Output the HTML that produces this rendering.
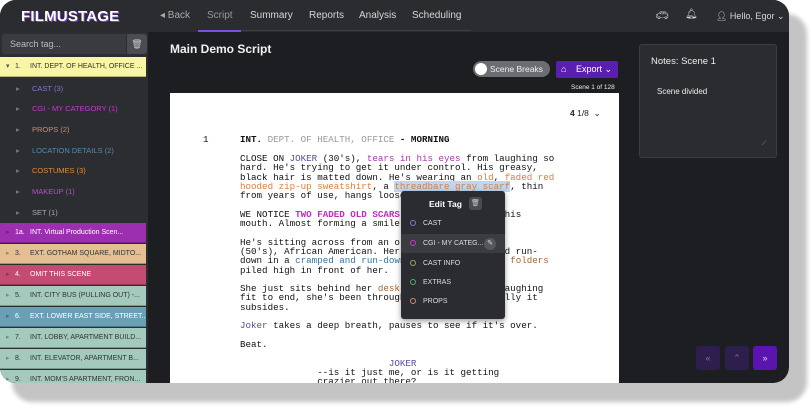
<!DOCTYPE html>
<html><head><meta charset="utf-8"><style>
*{box-sizing:border-box;margin:0;padding:0}
body{width:811px;height:408px;background:#fff;font-family:"Liberation Sans",sans-serif;position:relative;overflow:hidden}
.shadow{position:absolute;left:12px;top:14px;width:795px;height:388px;background:#c4c4c4;border-radius:20px;filter:blur(2px)}
.app{position:absolute;left:0;top:0;width:789px;height:383px;background:#1c1e22;border-radius:16px;overflow:hidden}
.nav{position:absolute;left:0;top:0;width:789px;height:32px;background:#2a2c30}
.nav span{position:absolute;top:10px;font-size:10px;color:#d6d6d6;white-space:nowrap}
.logo{position:absolute;left:21px;top:8px;font-weight:bold;font-size:15px;color:#fff;letter-spacing:.2px;text-shadow:1px 1px 0 #7a3fe0}
.side{position:absolute;left:0;top:32px;width:148px;height:351px;background:#2b2d31}
.search{position:absolute;left:2px;top:2px;width:124px;height:20px;background:#393b40;color:#bbb;font-size:9px;padding:5px 8px;border-radius:3px 0 0 3px}
.trash{position:absolute;left:127px;top:2px;width:20px;height:20px;background:#4a4c51;border-radius:0 3px 3px 0;color:#ccc;font-size:9px;text-align:center;line-height:20px}
.row{position:absolute;left:0;width:146px;height:20px;font-size:7px;line-height:20px;color:#fff;border-bottom:1px solid rgba(0,0,0,.25);white-space:nowrap;overflow:hidden}
.row .a{position:absolute;left:6px;color:rgba(0,0,0,.3)}
.row .n{position:absolute;left:15px}
.row .t{position:absolute;left:30px}
.sub{position:absolute;left:0;width:146px;font-size:7.5px;white-space:nowrap}
.sub .a{position:absolute;left:16px;color:#777}
.sub .t{position:absolute;left:32px}
.page{position:absolute;left:170px;top:93px;width:449px;height:300px;background:#fff}
.mono{font-family:"Liberation Mono",monospace;font-size:9.2px;line-height:9.3px;color:#111;position:absolute;white-space:pre}
.c{color:#5b4aa8}.p{color:#a63aa8}.o{color:#de7a3a}.m{color:#c42bc4;font-weight:bold}.b{color:#3b6f9a}.br{color:#a0653d}
.pop{position:absolute;left:401px;top:191px;width:104px;height:128px;background:#2a2c31;border-radius:3px;box-shadow:0 2px 6px rgba(0,0,0,.4);overflow:hidden}
.pop .i{position:absolute;left:0;width:104px;height:19px;font-size:7px;color:#ddd;line-height:19px;padding-left:22px;white-space:nowrap}
.pop .i b{position:absolute;left:9px;top:6px;width:6px;height:6px;border-radius:50%;border:1.3px solid}
.notes{position:absolute;left:639px;top:44px;width:138px;height:114px;background:#2a2c30;border:1px solid #3b3d42;border-radius:3px}
.btn{position:absolute;top:346px;width:24px;height:24px;border-radius:3px;font-size:9px;text-align:center;line-height:24px}
</style></head><body>
<div class="shadow"></div>
<div class="app">
<div class="nav">
<div class="logo">FILMUSTAGE</div>
<span style="left:160px;color:#aaa">◂ Back</span>
<span style="left:207px;color:#999">Script</span>
<div style="position:absolute;left:198px;top:30px;width:43px;height:2px;background:#7b4de0"></div>
<div style="position:absolute;left:241px;top:30px;width:230px;height:1px;background:#3c3e43"></div>
<span style="left:250px">Summary</span>
<span style="left:309px">Reports</span>
<span style="left:359px">Analysis</span>
<span style="left:412px">Scheduling</span>
<span style="left:655px;font-size:11px;top:9px">🚗︎</span>
<span style="left:685px;top:9px">🔔︎</span>
<span style="left:716px;font-size:9px;top:11px">👤︎ Hello, Egor ⌄</span>
</div>
<div class="side">
<div class="search">Search tag...</div><div class="trash">🗑︎</div>
<div class="row" style="top:25px;background:#f8f5a6;color:#333"><span class="a" style="color:#555">▾</span><span class="n">1.</span><span class="t">INT. DEPT. OF HEALTH, OFFICE ...</span></div>
<div class="sub" style="top:52px;color:#7f79c8"><span class="a">▸</span><span class="t">CAST (3)</span></div>
<div class="sub" style="top:72px;color:#c43ccc"><span class="a">▸</span><span class="t">CGI - MY CATEGORY (1)</span></div>
<div class="sub" style="top:93px;color:#d28a68"><span class="a">▸</span><span class="t">PROPS (2)</span></div>
<div class="sub" style="top:114px;color:#5a89a8"><span class="a">▸</span><span class="t">LOCATION DETAILS (2)</span></div>
<div class="sub" style="top:134px;color:#e08a3c"><span class="a">▸</span><span class="t">COSTUMES (3)</span></div>
<div class="sub" style="top:155px;color:#b055c0"><span class="a">▸</span><span class="t">MAKEUP (1)</span></div>
<div class="sub" style="top:176px;color:#aaa"><span class="a">▸</span><span class="t">SET (1)</span></div>
<div class="row" style="top:191px;background:#9c2fb0"><span class="a">▸</span><span class="n">1a.</span><span class="t">INT. Virtual Production Scen...</span></div>
<div class="row" style="top:212px;background:#e3bf91;color:#333"><span class="a">▸</span><span class="n">3.</span><span class="t">EXT. GOTHAM SQUARE, MIDTO...</span></div>
<div class="row" style="top:233px;background:#c44b72"><span class="a">▸</span><span class="n">4.</span><span class="t">OMIT THIS SCENE</span></div>
<div class="row" style="top:254px;background:#a4c9bd;color:#333"><span class="a">▸</span><span class="n">5.</span><span class="t">INT. CITY BUS (PULLING OUT) -...</span></div>
<div class="row" style="top:275px;background:#6b9fb5;color:#fff"><span class="a">▸</span><span class="n">6.</span><span class="t">EXT. LOWER EAST SIDE, STREET...</span></div>
<div class="row" style="top:296px;background:#a4c9bd;color:#333"><span class="a">▸</span><span class="n">7.</span><span class="t">INT. LOBBY, APARTMENT BUILD...</span></div>
<div class="row" style="top:317px;background:#a4c9bd;color:#333"><span class="a">▸</span><span class="n">8.</span><span class="t">INT. ELEVATOR, APARTMENT B...</span></div>
<div class="row" style="top:338px;background:#a4c9bd;color:#333"><span class="a">▸</span><span class="n">9.</span><span class="t">INT. MOM'S APARTMENT, FRON...</span></div>
</div>
<div style="position:absolute;left:170px;top:42px;font-size:12px;font-weight:bold;color:#f0f0f0">Main Demo Script</div>
<div style="position:absolute;left:473px;top:61px;width:77px;height:16px;background:#6b6d72;border-radius:8px;font-size:8.5px;color:#eee;line-height:16px;padding-left:17px;white-space:nowrap"><div style="position:absolute;left:2px;top:2px;width:12px;height:12px;border-radius:50%;background:#fff"></div>Scene Breaks</div>
<div style="position:absolute;left:556px;top:61px;width:62px;height:17px;background:#5a1fb0;border-radius:2px;font-size:9px;color:#fff;line-height:17px;white-space:nowrap"><span style="position:absolute;left:5px">⌂</span><span style="position:absolute;left:20px">Export ⌄</span></div>
<div style="position:absolute;left:571px;top:84px;font-size:6.5px;color:#eee;white-space:nowrap">Scene 1 of 128</div>
<div class="page"></div>
<div style="position:absolute;left:570px;top:108px;font-size:8.5px;color:#222;white-space:nowrap"><b>4</b> 1/8 &nbsp;⌄</div>
<div class="mono" style="left:203px;top:135px">1</div>
<div class="mono" style="left:240px;top:135px"><b>INT.</b> <span style="color:#999">DEPT. OF HEALTH, OFFICE</span> <b>- MORNING</b></div>
<div class="mono" style="left:240px;top:154px">CLOSE ON <span class="c">JOKER</span> (30's), <span class="p">tears in his eyes</span> from laughing so
hard. He's trying to get it under control. His greasy,
black hair is matted down. He's wearing an <span class="o">old</span>, <span class="o">faded red</span>
<span class="o">hooded zip-up sweatshirt</span>, a <span class="o" style="background:#bcd7f3">threadbare gray scarf</span>, thin
from years of use, hangs loose around his neck.

WE NOTICE <span class="m">TWO FADED OLD SCARS</span> at the corners of his
mouth. Almost forming a smile.

He's sitting across from an older <span class="c">SOCIAL WORKER</span>
(50's), African American. Her office is small and run-
down in a <span class="b">cramped and run-down office</span>, <span class="br">stacks of folders</span>
piled high in front of her.

She just sits behind her <span class="br">desk</span>, waiting for his laughing
fit to end, she's been through this before. Finally it
subsides.

<span class="c">Joker</span> takes a deep breath, pauses to see if it's over.

Beat.

                           <span class="c">JOKER</span>
              --is it just me, or is it getting
              crazier out there?</div>
<div class="pop">
<div style="position:absolute;left:28px;top:8px;font-size:8.5px;font-weight:bold;color:#fff">Edit Tag</div>
<div style="position:absolute;left:68px;top:6px;width:13px;height:13px;background:#4a4c51;border-radius:3px;font-size:7px;color:#ccc;text-align:center;line-height:13px">🗑︎</div>
<div class="i" style="top:23px"><b style="border-color:#7f79c8"></b>CAST</div>
<div class="i" style="top:43px;background:#3a3c41"><b style="border-color:#c43ccc"></b>CGI - MY CATEG...<span style="position:absolute;left:83px;top:4px;width:12px;height:12px;border-radius:50%;background:#55575c;line-height:12px;text-align:center;font-size:7px">✎</span></div>
<div class="i" style="top:63px"><b style="border-color:#9aa85a"></b>CAST INFO</div>
<div class="i" style="top:82px"><b style="border-color:#4fb06a"></b>EXTRAS</div>
<div class="i" style="top:101px"><b style="border-color:#d28a68"></b>PROPS</div>
</div>
<div class="notes">
<div style="position:absolute;left:11px;top:11px;font-size:9.5px;color:#eee;white-space:nowrap">Notes: Scene 1</div>
<div style="position:absolute;left:17px;top:42px;font-size:8px;color:#eee;white-space:nowrap">Scene divided</div>
<div style="position:absolute;left:122px;top:96px;font-size:6px;color:#999">⟋</div>
</div>
<div class="btn" style="left:696px;background:#2e1e4e;color:#777">«</div>
<div class="btn" style="left:725px;background:#2e1e4e;color:#777">⌃</div>
<div class="btn" style="left:753px;background:#5a14b0;color:#ddd">»</div>
</div>
</body></html>
